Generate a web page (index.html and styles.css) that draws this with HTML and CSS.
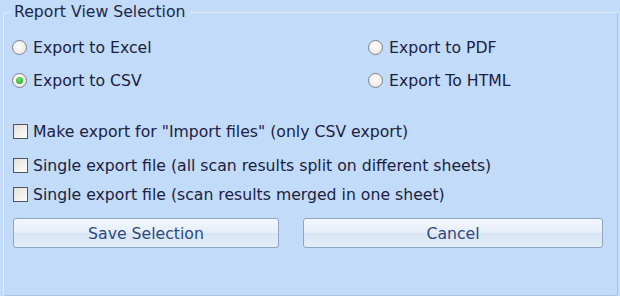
FILE: index.html
```html
<!DOCTYPE html>
<html lang="en">

<head>
    <meta charset="UTF-8">
    <meta name="viewport" content="width=device-width, initial-scale=1.0">
    <title>Report View Selection</title>
    <link rel="stylesheet" href="styles.css">
</head>

<body>
    <fieldset class="panel">
        <legend class="panel-title">Report View Selection</legend>

        <div class="radios">
            <label class="option"><span class="radio"></span>Export to Excel</label>
            <label class="option"><span class="radio"></span>Export to PDF</label>
            <label class="option"><span class="radio checked"></span>Export to CSV</label>
            <label class="option"><span class="radio"></span>Export To HTML</label>
        </div>

        <div class="checks">
            <label class="option check-first"><span class="box"></span>Make export for "Import files" (only CSV export)</label>
            <label class="option check-second"><span class="box"></span>Single export file (all scan results split on different sheets)</label>
            <label class="option check-third"><span class="box"></span>Single export file (scan results merged in one sheet)</label>
        </div>

        <div class="buttons">
            <button class="btn btn-save">Save Selection</button>
            <button class="btn btn-cancel">Cancel</button>
        </div>
    </fieldset>
</body>

</html>
```

FILE: styles.css
```css
body {
    margin: 0;
    padding: 0;
    width: 620px;
    height: 296px;
    background: #c1dbf9;
    font-family: "DejaVu Sans", Verdana, sans-serif;
    font-size: 15.7px;
    color: #1c2140;
    overflow: hidden;
}

.panel {
    margin: 3px 2px 0 3px;
    padding: 0;
    border: 1px solid #e2edfb;
    border-right-color: #a9c4e6;
    border-bottom-color: #a9c4e6;
    border-radius: 3px;
    box-sizing: border-box;
    height: 293px;
}

.panel-title {
    margin-left: 6px;
    padding: 0 4px;
    line-height: 18px;
    color: #22284a;
}

.radios {
    display: grid;
    grid-template-columns: 356px 1fr;
    row-gap: 15px;
    padding: 17px 0 0 8px;
}

.option {
    display: flex;
    align-items: center;
    height: 18px;
    white-space: nowrap;
}

.radio {
    width: 13px;
    height: 13px;
    margin-right: 6px;
    border: 1px solid #7b8594;
    border-radius: 50%;
    background: radial-gradient(circle at 45% 40%, #ffffff, #ece9e2 70%, #d8d5cf);
    position: relative;
}

.radio.checked::after {
    content: "";
    position: absolute;
    left: 3px;
    top: 3px;
    width: 7px;
    height: 7px;
    border-radius: 50%;
    background: radial-gradient(circle at 40% 35%, #6fe06a, #1d9e22);
}

.checks {
    padding: 33px 0 0 9px;
}

.box {
    width: 13px;
    height: 13px;
    margin-right: 5px;
    border: 1px solid #4f5662;
    background: linear-gradient(135deg, #e4e1da, #fdfdfb);
}

.check-second {
    margin-top: 16px;
}

.check-third {
    margin-top: 11px;
}

.buttons {
    display: flex;
    gap: 24px;
    padding: 15px 0 0 9px;
}

.btn {
    height: 30px;
    padding: 0;
    border: 1px solid #8ea6c6;
    border-radius: 3px;
    background: linear-gradient(to bottom, #f3f7fd 0%, #e6eefa 50%, #d9e5f5 51%, #e4edf9 100%);
    font-family: "DejaVu Sans", Verdana, sans-serif;
    font-size: 15.7px;
    color: #2d4a80;
    cursor: pointer;
}

.btn-save {
    width: 266px;
}

.btn-cancel {
    width: 300px;
}
```
